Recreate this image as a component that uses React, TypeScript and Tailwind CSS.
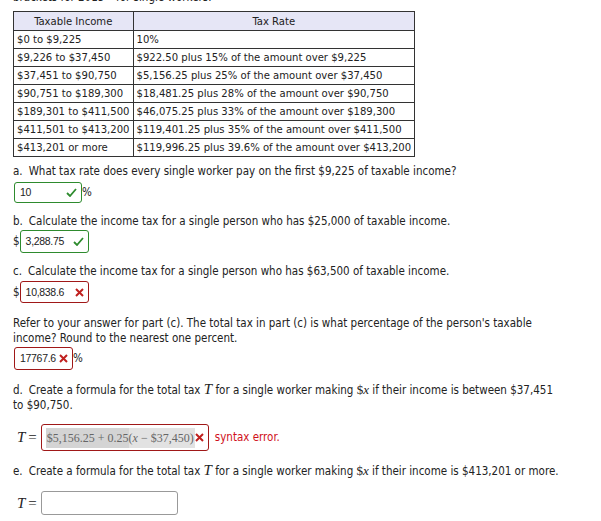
import React from 'react';

const ROWS: [string, string][] = [
  ['$0 to $9,225', '10%'],
  ['$9,226 to $37,450', '$922.50 plus 15% of the amount over $9,225'],
  ['$37,451 to $90,750', '$5,156.25 plus 25% of the amount over $37,450'],
  ['$90,751 to $189,300', '$18,481.25 plus 28% of the amount over $90,750'],
  ['$189,301 to $411,500', '$46,075.25 plus 33% of the amount over $189,300'],
  ['$411,501 to $413,200', '$119,401.25 plus 35% of the amount over $411,500'],
  ['$413,201 or more', '$119,996.25 plus 39.6% of the amount over $413,200'],
];

function Check() {
  return (
    <svg width="11" height="9" viewBox="0 0 11 9" className="shrink-0">
      <path d="M1 5 L4 8 L10 1" fill="none" stroke="#2e8b2e" strokeWidth="1.8" />
    </svg>
  );
}

function Cross() {
  return (
    <svg width="9" height="9" viewBox="0 0 9 9" className="shrink-0">
      <path d="M1 1 L8 8 M8 1 L1 8" fill="none" stroke="#c0201f" strokeWidth="2" />
    </svg>
  );
}

function Answer({ value, ok, width, height }: { value: string; ok: boolean; width: string; height: string }) {
  return (
    <div
      className={`flex items-center justify-between shrink-0 ${height} ${width} rounded-[3px] border pl-[5px] pr-[4px] ${
        ok ? 'border-[#2e8b2e]' : 'border-[#a01818]'
      }`}
    >
      <span className="font-['Liberation_Sans',Arial,sans-serif] text-[10.5px] tracking-[-0.3px] text-[#222]">{value}</span>
      {ok ? <Check /> : <Cross />}
    </div>
  );
}

function Item({ label, children }: { label: string; children: React.ReactNode }) {
  return (
    <p>
      <span className="mr-[6px]">{label}</span>
      {children}
    </p>
  );
}

const mathT = <span className="font-['Liberation_Serif',serif] italic text-[15px] leading-[15px]">T</span>;
const mathX = (
  <span className="font-['Liberation_Serif',serif] text-[13px] leading-[15px]">
    $<span className="italic">x</span>
  </span>
);

export default function App() {
  return (
    <div className="w-[601px] h-[521px] overflow-hidden bg-white text-[#222] font-['DejaVu_Sans_Condensed','Lato',sans-serif] text-[11.5px] leading-[15px] px-[13px]">
      <p className="mt-[-10px] h-[21px]">brackets for 2015 – for single workers.</p>

      <table className="border-collapse border border-[#333] w-[400px] text-[11.2px]">
        <thead>
          <tr className="bg-[#e6e6f6]">
            <th className="border border-[#333] font-normal h-[19px] w-[120px] text-center">Taxable Income</th>
            <th className="border border-[#333] font-normal text-center">Tax Rate</th>
          </tr>
        </thead>
        <tbody>
          {ROWS.map(([a, b]) => (
            <tr key={a}>
              <td className="border border-[#333] h-[18px] px-[3px] whitespace-nowrap">{a}</td>
              <td className="border border-[#333] px-[3px] whitespace-nowrap">{b}</td>
            </tr>
          ))}
        </tbody>
      </table>

      <div className="mt-[7px]">
        <Item label="a.">What tax rate does every single worker pay on the first $9,225 of taxable income?</Item>
        <div className="flex items-center mt-[3px] ml-[1px]">
          <Answer value="10" ok width="w-[68px]" height="h-[21px]" />
          <span>%</span>
        </div>
      </div>

      <div className="mt-[11px]">
        <Item label="b.">Calculate the income tax for a single person who has $25,000 of taxable income.</Item>
        <div className="flex items-center mt-[1px]">
          <span>$</span>
          <Answer value="3,288.75" ok width="w-[69px]" height="h-[23px]" />
        </div>
      </div>

      <div className="mt-[11px]">
        <Item label="c.">Calculate the income tax for a single person who has $63,500 of taxable income.</Item>
        <div className="flex items-center mt-[2px]">
          <span>$</span>
          <Answer value="10,838.6" ok={false} width="w-[69px]" height="h-[22px]" />
        </div>
      </div>

      <div className="mt-[13px] pr-[35px]">
        <p>
          Refer to your answer for part (c). The total tax in part (c) is what percentage of the person's taxable income? Round to the nearest one percent.
        </p>
        <div className="flex items-center mt-[1px] ml-[1px]">
          <Answer value="17767.6" ok={false} width="w-[59px]" height="h-[23px]" />
          <span>%</span>
        </div>
      </div>

      <div className="mt-[12px] pr-[35px]">
        <Item label="d.">
          Create a formula for the total tax {mathT} for a single worker making {mathX} if their income is between $37,451 to $90,750.
        </Item>
      </div>

      <div className="flex items-center mt-[11px] ml-[4px]">
        {mathT}
        <span className="font-['Liberation_Serif',serif] text-[15px] ml-[3px] mr-[4px]">=</span>
        <div className="flex items-center shrink-0 h-[27px] w-[168px] rounded-[3px] border border-[#a01818] pl-[4px] pr-[4px]">
          <span className="text-[#666] font-['Liberation_Serif',serif] text-[12px] leading-[20px] whitespace-nowrap">
            <span className="bg-[#d4d4d4] py-[3px] pl-[1px]">$5,156.25 + 0.25</span>
            <span className="bg-[#e2e2e2] py-[3px] pr-[1px]">
              (<span className="italic">x</span> − $37,450)
            </span>
          </span>
          <span className="ml-auto">
            <Cross />
          </span>
        </div>
        <span className="ml-[6px] text-[#d0101a]">syntax error.</span>
      </div>

      <div className="mt-[12px]">
        <Item label="e.">
          Create a formula for the total tax {mathT} for a single worker making {mathX} if their income is $413,201 or more.
        </Item>
      </div>

      <div className="flex items-center mt-[12px] ml-[4px]">
        {mathT}
        <span className="font-['Liberation_Serif',serif] text-[15px] ml-[3px] mr-[4px]">=</span>
        <div className="h-[24px] w-[137px] rounded-[3px] border border-[#999]" />
      </div>
    </div>
  );
}
